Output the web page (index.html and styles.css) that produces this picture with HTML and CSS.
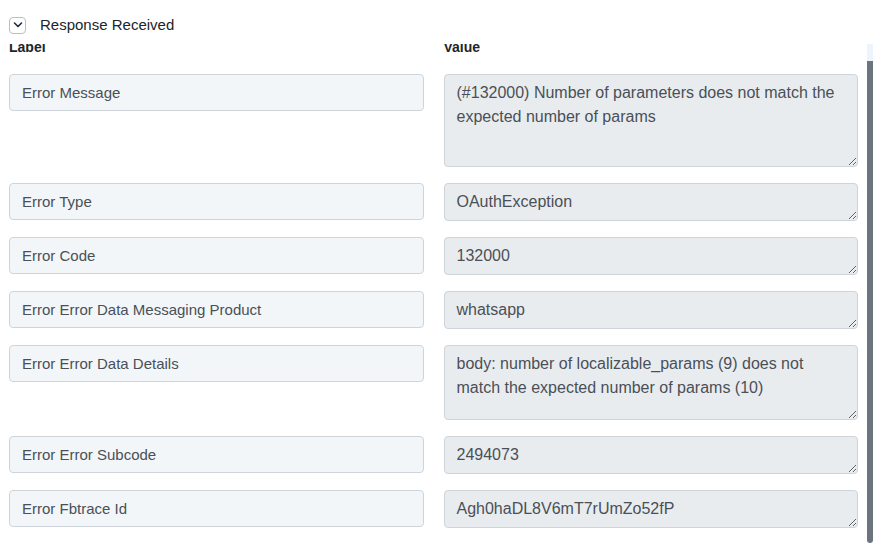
FILE: index.html
```html
<!DOCTYPE html>
<html lang="en">
<head>
    <meta charset="UTF-8">
    <meta name="viewport" content="width=device-width, initial-scale=1.0">
    <title>Response Received</title>
    <link rel="stylesheet" href="styles.css">
</head>
<body>
    <div class="panel-header">
        <button class="toggle" type="button" aria-label="Collapse">
            <svg width="10" height="8" viewBox="0 0 10 8">
                <polyline points="1.5,2 5,5.5 8.5,2" fill="none" stroke="#1f2a44" stroke-width="1.6" stroke-linecap="round" stroke-linejoin="round"/>
            </svg>
        </button>
        <span class="panel-title">Response Received</span>
    </div>

    <div class="panel-body">
        <div class="scroll-area">
            <div class="fields">
                <div class="col-head">Label</div>
                <div class="col-head">Value</div>

                <input class="field-label" type="text" value="Error Message" readonly>
                <textarea class="field-value tall" readonly>(#132000) Number of parameters does not match the expected number of params</textarea>

                <input class="field-label" type="text" value="Error Type" readonly>
                <textarea class="field-value" readonly>OAuthException</textarea>

                <input class="field-label" type="text" value="Error Code" readonly>
                <textarea class="field-value" readonly>132000</textarea>

                <input class="field-label" type="text" value="Error Error Data Messaging Product" readonly>
                <textarea class="field-value" readonly>whatsapp</textarea>

                <input class="field-label" type="text" value="Error Error Data Details" readonly>
                <textarea class="field-value medium" readonly>body: number of localizable_params (9) does not match the expected number of params (10)</textarea>

                <input class="field-label" type="text" value="Error Error Subcode" readonly>
                <textarea class="field-value" readonly>2494073</textarea>

                <input class="field-label" type="text" value="Error Fbtrace Id" readonly>
                <textarea class="field-value" readonly>Agh0haDL8V6mT7rUmZo52fP</textarea>
            </div>
        </div>
        <div class="scrollbar">
            <div class="scrollbar-thumb"></div>
        </div>
    </div>
</body>
</html>
```

FILE: styles.css
```css
body {
    font-family: 'Liberation Sans', Arial, sans-serif;
    background-color: #fff;
    color: #212529;
    margin: 0;
    padding: 0;
    height: 550px;
    overflow: hidden;
}

.panel-header {
    height: 44px;
    display: flex;
    align-items: center;
    padding: 6px 0 0 9px;
    box-sizing: border-box;
    background-color: #fff;
    position: relative;
    z-index: 1;
}
.toggle {
    width: 17px;
    height: 17px;
    padding: 0;
    border: 1px solid #b9bec5;
    border-radius: 4px;
    background-color: #fff;
    display: flex;
    align-items: center;
    justify-content: center;
}
.panel-title {
    margin-left: 14px;
    margin-top: -1px;
    font-size: 15px;
    color: #212529;
}

.panel-body {
    display: flex;
    height: 506px;
}
.scroll-area {
    flex: 1;
    overflow: hidden;
}
.fields {
    display: grid;
    grid-template-columns: 1fr 1fr;
    column-gap: 20px;
    row-gap: 16px;
    padding: 0 9px;
    margin-top: -7px;
}
.col-head {
    font-size: 14px;
    font-weight: bold;
    line-height: 21px;
}

.field-label, .field-value {
    display: block;
    width: 100%;
    height: 38px;
    box-sizing: border-box;
    padding: 6px 12px;
    font-family: inherit;
    line-height: 24px;
    color: #495057;
    border: 1px solid #ced4da;
    border-radius: 4px;
    margin: 0;
    outline: none;
}
.field-label {
    height: 37px;
    padding: 5px 12px 6px;
    font-size: 15px;
    background-color: #f3f6f9;
}
.field-value {
    font-size: 16px;
    background-color: #e9ecef;
    resize: vertical;
    overflow: hidden;
}
.field-value.tall {
    height: 93px;
}
.field-value.medium {
    height: 75px;
}

.scrollbar {
    width: 6px;
    background: linear-gradient(#edf4fc 0, #edf4fc 17px, #fff 17px);
}
.scrollbar-thumb {
    margin-top: 17px;
    height: 482px;
    background-color: #6c757d;
    border-radius: 0 0 3px 3px;
}
```
